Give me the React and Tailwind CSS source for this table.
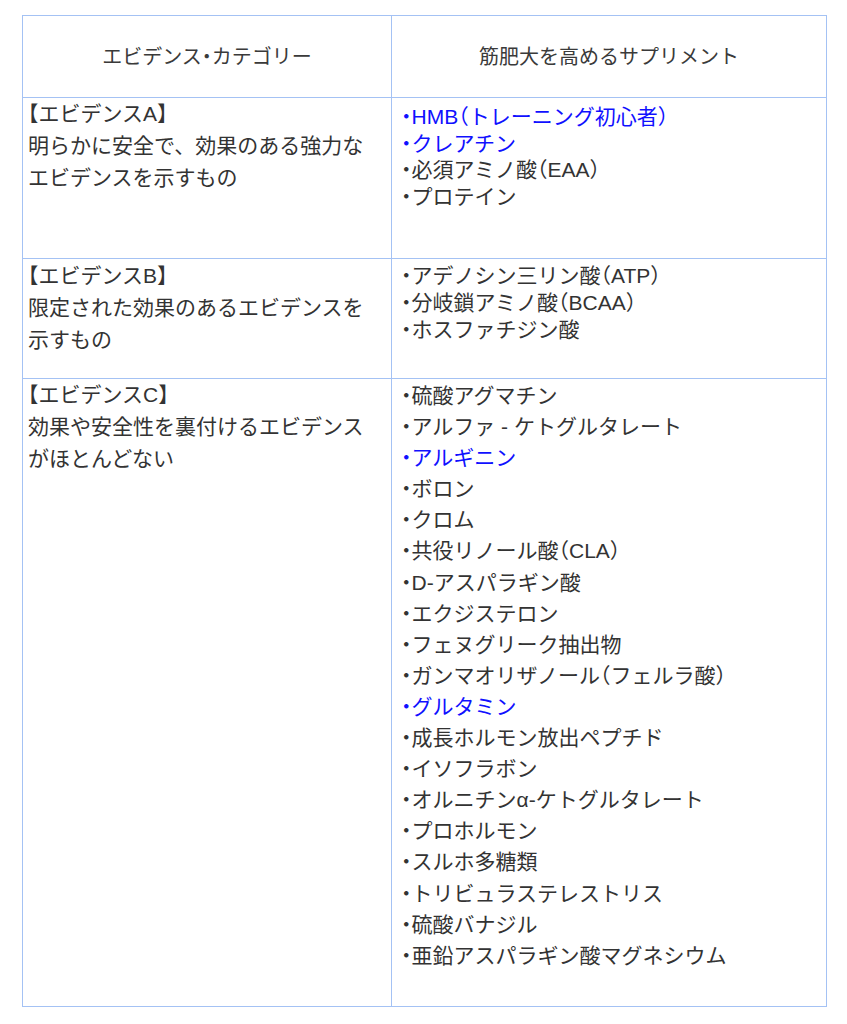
import React from "react";

const rowA = [
  { t: "HMB（トレーニング初心者）", blue: true },
  { t: "クレアチン", blue: true },
  { t: "必須アミノ酸（EAA）" },
  { t: "プロテイン" },
];
const rowB = [
  { t: "アデノシン三リン酸（ATP）" },
  { t: "分岐鎖アミノ酸（BCAA）" },
  { t: "ホスファチジン酸" },
];
const rowC = [
  { t: "硫酸アグマチン" },
  { t: "アルファ - ケトグルタレート" },
  { t: "アルギニン", blue: true },
  { t: "ボロン" },
  { t: "クロム" },
  { t: "共役リノール酸（CLA）" },
  { t: "D-アスパラギン酸" },
  { t: "エクジステロン" },
  { t: "フェヌグリーク抽出物" },
  { t: "ガンマオリザノール（フェルラ酸）" },
  { t: "グルタミン", blue: true },
  { t: "成長ホルモン放出ペプチド" },
  { t: "イソフラボン" },
  { t: "オルニチンα-ケトグルタレート" },
  { t: "プロホルモン" },
  { t: "スルホ多糖類" },
  { t: "トリビュラステレストリス" },
  { t: "硫酸バナジル" },
  { t: "亜鉛アスパラギン酸マグネシウム" },
];

function List({ items, h, pt }) {
  return (
    <div className={pt}>
      {items.map((it, i) => (
        <div
          key={i}
          className={`${h} whitespace-nowrap ${it.blue ? "text-[#1010ff]" : ""}`}
        >
          <span className="[font-feature-settings:'halt']">・</span>
          <span className="[font-feature-settings:'halt']">{it.t}</span>
        </div>
      ))}
    </div>
  );
}

function Left({ lines, pt }) {
  return (
    <div className={pt}>
      {lines.map((l, i) => (
        <div key={i} className="h-[32px] leading-[32px] whitespace-nowrap">
          {l}
        </div>
      ))}
    </div>
  );
}

const H = ({ children }) => (
  <span className="[font-feature-settings:'halt']">{children}</span>
);

export default function App() {
  return (
    <div className="min-h-[1024px] bg-white pt-[15px] pl-[22px] text-[#333333] [font-family:'Liberation_Sans','Noto_Sans_CJK_JP',sans-serif]">
      <div className="grid w-[805px] grid-cols-[369px_435px] grid-rows-[82px_161px_120px_628px] border-l border-t border-[#a4c2f4] text-[21px]">
        <div className="flex items-center justify-center border-b border-r border-[#a4c2f4] text-[20px] text-[#3a3a3a]">
          <span>
            エビデンス<H>・</H>カテゴリー
          </span>
        </div>
        <div className="flex items-center justify-center border-b border-r border-[#a4c2f4] text-[20px] text-[#3a3a3a]">
          筋肥大を高めるサプリメント
        </div>

        <div className="border-b border-r border-[#a4c2f4] pl-[5px]">
          <Left
            pt="pt-0"
            lines={[
              <H key="a">【エビデンスA】</H>,
              "明らかに安全で、効果のある強力な",
              "エビデンスを示すもの",
            ]}
          />
        </div>
        <div className="border-b border-r border-[#a4c2f4] pl-[9px] leading-[26.5px]">
          <List items={rowA} h="h-[26.5px]" pt="pt-[6px]" />
        </div>

        <div className="border-b border-r border-[#a4c2f4] pl-[5px]">
          <Left
            pt="pt-[1px]"
            lines={[
              <H key="b">【エビデンスB】</H>,
              "限定された効果のあるエビデンスを",
              "示すもの",
            ]}
          />
        </div>
        <div className="border-b border-r border-[#a4c2f4] pl-[9px] leading-[27px]">
          <List items={rowB} h="h-[27px]" pt="pt-[3px]" />
        </div>

        <div className="border-b border-r border-[#a4c2f4] pl-[5px]">
          <Left
            pt="pt-0"
            lines={[
              <H key="c">【エビデンスC】</H>,
              "効果や安全性を裏付けるエビデンス",
              "がほとんどない",
            ]}
          />
        </div>
        <div className="border-b border-r border-[#a4c2f4] pl-[9px] leading-[31px]">
          <List items={rowC} h="h-[31.1px]" pt="pt-[1px]" />
        </div>
      </div>
    </div>
  );
}
